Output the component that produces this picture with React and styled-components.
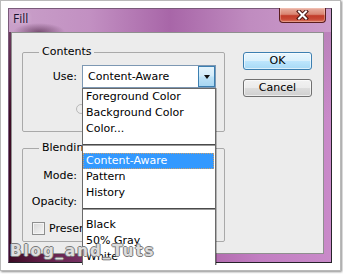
import React from "react";
import styled, { createGlobalStyle } from "styled-components";

const Global = createGlobalStyle`
  html, body { margin: 0; padding: 0; background: #fff; }
  body { width: 343px; height: 274px; overflow: hidden; font-family: "DejaVu Sans", sans-serif; font-size: 11px; color: #000; }
`;

const Frame = styled.div`
  position: relative;
  box-sizing: border-box;
  width: 341px;
  height: 271px;
  border: 1px solid #b9b9b9;
  background: #fff;
  box-shadow: 1px 1px 2px rgba(0, 0, 0, 0.45);
  padding: 7px;
  overflow: hidden;
`;

const Window = styled.div`
  box-sizing: border-box;
  width: 324px;
  height: 255px;
  display: flex;
  flex-direction: column;
  border: 1px solid #7a5a7a;
  border-right-color: #26222a;
  border-bottom-color: #26222a;
  padding-bottom: 8px;
  background:
    linear-gradient(to bottom, rgba(170, 120, 170, 0.55) 0, rgba(170, 120, 170, 0) 110px),
    linear-gradient(to right, #3c0c24 0, #5e1c44 30px, #a05598 45%, #c27ec2 78%, #c98ac9 100%);
`;

const TitleBar = styled.div`
  flex: none;
  height: 23px;
  display: flex;
  align-items: flex-start;
  background:
    radial-gradient(ellipse 26px 9px at 30px 23px, rgba(60, 20, 50, 0.55), rgba(60, 20, 50, 0)),
    linear-gradient(to right, #c9a0c9 0%, #c290c2 25%, #a866a8 50%, #c08cc0 75%, #cc9ccc 100%);
`;

const Title = styled.span`
  padding-left: 4px;
  font-family: "Open Sans", sans-serif;
  font-size: 12px;
  line-height: 19px;
  color: #1c1230;
  text-shadow: 0 0 5px rgba(255, 255, 255, 0.7);
`;

const CloseButton = styled.div`
  margin-left: auto;
  margin-right: 5px;
  margin-top: -1px;
  width: 47px;
  height: 15px;
  box-sizing: border-box;
  border: 1px solid #5a1e1e;
  border-top: none;
  border-radius: 0 0 4px 4px;
  background: linear-gradient(to bottom, #e9b0a2 0%, #d98572 45%, #c23c2a 55%, #c84a36 80%, #dc7a64 100%);
  box-shadow: inset 0 0 0 1px rgba(255, 220, 210, 0.35);
  display: flex;
  align-items: center;
  justify-content: center;
`;

const Client = styled.div`
  flex: 1;
  margin: 0 7px 0 2px;
  box-sizing: border-box;
  border: 1px solid #8f8f8f;
  background: #ececec;
  display: flex;
  align-items: flex-start;
  gap: 18px;
  padding: 12px 11px 0 10px;
`;

const LeftCol = styled.div`
  width: 203px;
  flex: none;
  display: flex;
  flex-direction: column;
`;

const Group = styled.fieldset`
  margin: ${(p) => p.$mt || 0}px 0 0 0;
  padding: ${(p) => p.$pt}px 0 ${(p) => p.$pb}px 0;
  border: 1px solid #a9a9a9;
  border-radius: 2px;
  min-width: 0;
`;

const Legend = styled.legend`
  margin-left: 16px;
  padding: 0 3px;
  font-size: 11px;
  line-height: 14px;
`;

const Row = styled.div`
  display: flex;
  align-items: center;
  gap: ${(p) => (p.$gap != null ? p.$gap : 5)}px;
  height: ${(p) => p.$h}px;
  margin-top: ${(p) => p.$mt || 0}px;
  padding-left: ${(p) => p.$pl || 0}px;
`;

const Label = styled.span`
  flex: none;
  width: 54px;
  text-align: right;
  white-space: nowrap;
`;

const SelectWrap = styled.div`
  position: relative;
  width: 134px;
  height: 23px;
  box-sizing: border-box;
  border: 1px solid #7d98b3;
  background: #fff;
  display: flex;
  align-items: center;
  padding-left: 5px;
`;

const SelectValue = styled.span`
  flex: 1;
`;

const ArrowButton = styled.div`
  width: 17px;
  height: 21px;
  box-sizing: border-box;
  border: 1px solid #3c7fb1;
  background: linear-gradient(to bottom, #e5f4fc 0%, #d3ecfa 48%, #bfe3f7 52%, #a8d6f2 100%);
  display: flex;
  align-items: center;
  justify-content: center;
`;

const Triangle = styled.div`
  width: 0;
  height: 0;
  border-left: 3.5px solid transparent;
  border-right: 3.5px solid transparent;
  border-top: 4px solid #111;
`;

const List = styled.div`
  position: absolute;
  left: -1px;
  right: -1px;
  top: calc(100% + 1px);
  z-index: 2;
  background: #fff;
  border: 1px solid #6a6a6a;
  border-bottom: none;
  box-shadow: 1px 0 0 rgba(0, 0, 0, 0.25);
`;

const Item = styled.div`
  height: 16px;
  line-height: 16px;
  padding-left: 3px;
  margin-right: 1px;
  white-space: nowrap;
  box-sizing: border-box;
  background: ${(p) => (p.$active ? "#3399ff" : "transparent")};
  color: ${(p) => (p.$active ? "#fff" : "#000")};
  outline: ${(p) => (p.$active ? "1px dotted #c9a070" : "none")};
  outline-offset: -1px;
`;

const Separator = styled.div`
  height: 16px;
  background: linear-gradient(
    to bottom,
    transparent 7px,
    #4a4a4a 7px,
    #4a4a4a 8px,
    #9a9a9a 8px,
    #9a9a9a 9px,
    transparent 9px
  );
`;

const Swatch = styled.div`
  width: 10px;
  height: 10px;
  box-sizing: border-box;
  border: 1px solid #b8b8b8;
  border-radius: 50%;
`;

const Checkbox = styled.div`
  flex: none;
  width: 13px;
  height: 13px;
  box-sizing: border-box;
  border: 1px solid #8e8f8f;
  background: linear-gradient(135deg, #d6d6d6, #f6f6f6);
  box-shadow: inset 0 0 0 1px #f4f4f4;
`;

const ButtonCol = styled.div`
  flex: none;
  width: 69px;
  margin-top: 7px;
  display: flex;
  flex-direction: column;
  gap: 9px;
`;

const Button = styled.div`
  height: 18px;
  box-sizing: border-box;
  border: 1px solid ${(p) => (p.$primary ? "#3c7fb1" : "#707070")};
  border-radius: 3px;
  background: ${(p) =>
    p.$primary
      ? "linear-gradient(to bottom, #eaf6fd 0%, #d9f0fc 50%, #bee6fd 50%, #a7d9f5 100%)"
      : "linear-gradient(to bottom, #f2f2f2 0%, #ebebeb 50%, #dddddd 50%, #cfcfcf 100%)"};
  box-shadow: inset 0 0 0 1px rgba(255, 255, 255, 0.6);
  display: flex;
  align-items: center;
  justify-content: center;
  font-size: 11px;
  line-height: 16px;
`;

const Watermark = styled.div`
  position: absolute;
  left: 9px;
  top: 242px;
  z-index: 3;
  font-family: "DejaVu Sans", sans-serif;
  font-weight: bold;
  font-size: 15px;
  line-height: 16px;
  letter-spacing: 2px;
  color: rgba(232, 232, 232, 0.92);
  text-shadow: 1px 0 0 #7a7a7a, -1px 0 0 #7a7a7a, 0 1px 0 #7a7a7a, 0 -1px 0 #7a7a7a;
  white-space: nowrap;
`;

const CloseIcon = () => (
  <svg width="13" height="10" viewBox="0 0 13 10">
    <path d="M3 1.5 L10 8.5 M10 1.5 L3 8.5" stroke="#4a1410" strokeWidth="4" strokeLinecap="square" fill="none" />
    <path d="M3 1.5 L10 8.5 M10 1.5 L3 8.5" stroke="#fff" strokeWidth="2" strokeLinecap="square" fill="none" />
  </svg>
);

export default function App() {
  return (
    <>
      <Global />
      <Frame>
        <Window>
          <TitleBar>
            <Title>Fill</Title>
            <CloseButton>
              <CloseIcon />
            </CloseButton>
          </TitleBar>
          <Client>
            <LeftCol>
              <Group $pt={6} $pb={17}>
                <Legend>Contents</Legend>
                <Row $h={23}>
                  <Label>Use:</Label>
                  <SelectWrap>
                    <SelectValue>Content-Aware</SelectValue>
                    <ArrowButton>
                      <Triangle />
                    </ArrowButton>
                    <List>
                      <Item>Foreground Color</Item>
                      <Item>Background Color</Item>
                      <Item>Color...</Item>
                      <Separator />
                      <Item $active>Content-Aware</Item>
                      <Item>Pattern</Item>
                      <Item>History</Item>
                      <Separator />
                      <Item>Black</Item>
                      <Item>50% Gray</Item>
                      <Item>White</Item>
                    </List>
                  </SelectWrap>
                </Row>
                <Row $h={10} $mt={16} $pl={53}>
                  <Swatch />
                </Row>
              </Group>
              <Group $mt={9} $pt={9} $pb={5}>
                <Legend>Blending</Legend>
                <Row $h={22}>
                  <Label>Mode:</Label>
                </Row>
                <Row $h={22} $mt={4}>
                  <Label>Opacity:</Label>
                </Row>
                <Row $h={16} $mt={8} $pl={9} $gap={4}>
                  <Checkbox />
                  <span>Preserve Transparency</span>
                </Row>
              </Group>
            </LeftCol>
            <ButtonCol>
              <Button $primary>OK</Button>
              <Button>Cancel</Button>
            </ButtonCol>
          </Client>
        </Window>
        <Watermark>Blog_and_Tuts</Watermark>
      </Frame>
    </>
  );
}
